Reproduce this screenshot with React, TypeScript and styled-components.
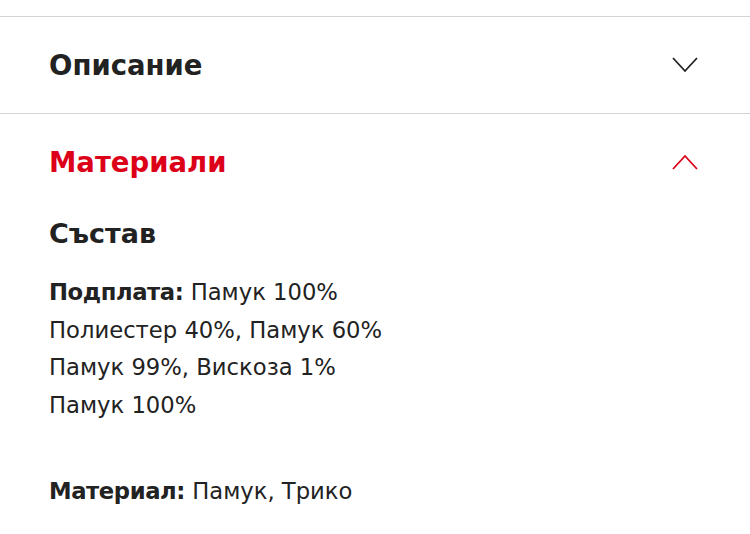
import styled, { createGlobalStyle } from "styled-components";

const GlobalStyle = createGlobalStyle`
  body {
    margin: 0;
    background: #fff;
    font-family: "DejaVu Sans", sans-serif;
    color: #222;
  }
`;

const Page = styled.div`
  width: 750px;
  padding-top: 16px;
`;

const Section = styled.section`
  border-top: 1px solid #d4d4d4;
`;

const Header = styled.div<{ $open?: boolean }>`
  height: 96px;
  display: flex;
  align-items: center;
  justify-content: space-between;
  padding: 0 52px 0 49px;
  color: ${(p) => (p.$open ? "#dc0019" : "#222")};
`;

const Title = styled.h2`
  margin: 0;
  font-size: 27.5px;
  font-weight: 700;
`;

const Body = styled.div`
  padding: 8px 49px 0;
`;

const SubTitle = styled.h3`
  margin: 0 0 24px;
  font-size: 27px;
  line-height: 32px;
  font-weight: 700;
`;

const List = styled.div<{ $gap?: number }>`
  margin-top: ${(p) => p.$gap ?? 0}px;
  font-size: 22.7px;
  line-height: 37.5px;
`;

const Line = styled.div``;

const Label = styled.b`
  font-weight: 700;
  letter-spacing: -0.4px;
`;

const Chevron = ({ up }: { up?: boolean }) => (
  <svg width="26" height="16" viewBox="0 0 26 16" fill="none">
    <path
      d={up ? "M1 15 L13 2 L25 15" : "M1 1 L13 14 L25 1"}
      stroke="currentColor"
      strokeWidth="1.8"
    />
  </svg>
);

export default function App() {
  return (
    <Page>
      <GlobalStyle />
      <Section>
        <Header>
          <Title>Описание</Title>
          <Chevron />
        </Header>
      </Section>
      <Section>
        <Header $open>
          <Title>Материали</Title>
          <Chevron up />
        </Header>
        <Body>
          <SubTitle>Състав</SubTitle>
          <List>
            <Line>
              <Label>Подплата:</Label> Памук 100%
            </Line>
            <Line>Полиестер 40%, Памук 60%</Line>
            <Line>Памук 99%, Вискоза 1%</Line>
            <Line>Памук 100%</Line>
          </List>
          <List $gap={49}>
            <Line>
              <Label>Материал:</Label> Памук, Трико
            </Line>
          </List>
        </Body>
      </Section>
    </Page>
  );
}
